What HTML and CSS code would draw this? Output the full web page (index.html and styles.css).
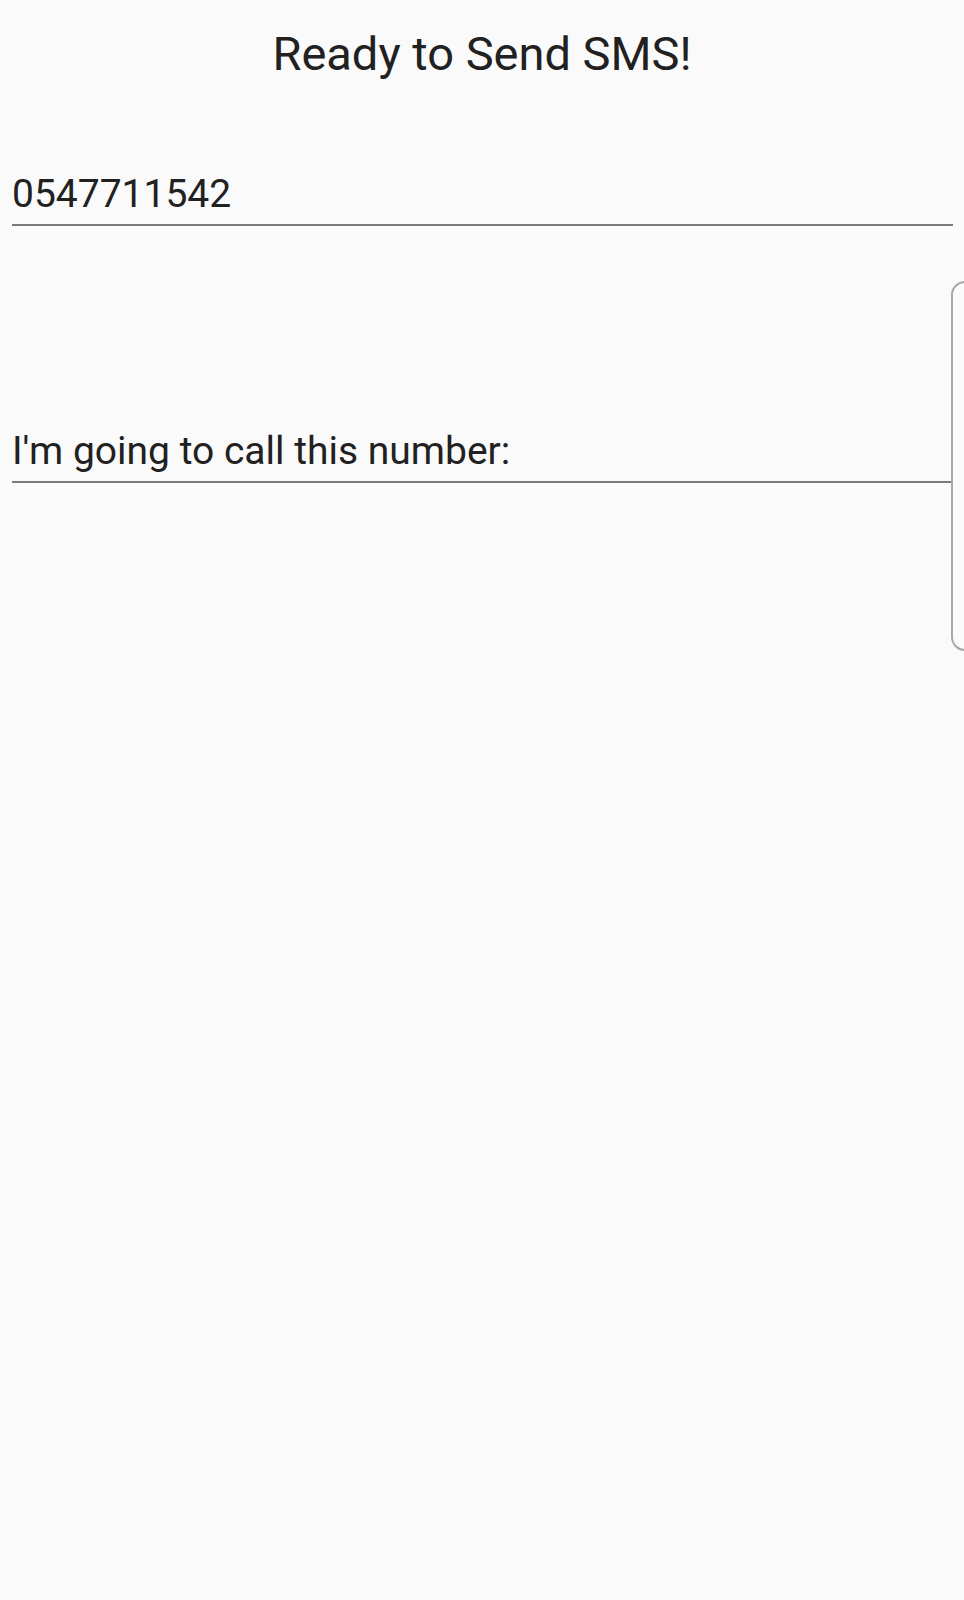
FILE: index.html
```html
<!DOCTYPE html>
<html>
<head>
<meta charset="utf-8">
<link rel="stylesheet" href="styles.css">
</head>
<body>
<div class="screen">
  <h1 class="title">Ready to Send SMS!</h1>
  <div class="field field-phone"><span class="value">0547711542</span></div>
  <div class="field field-msg"><span class="value">I'm going to call this number:</span></div>
  <div class="side-handle"></div>
</div>
</body>
</html>
```
FILE: styles.css
```css
html, body {
  margin: 0;
  padding: 0;
  background: #fafafa;
}
.screen {
  position: relative;
  width: 964px;
  height: 1600px;
  font-family: Roboto, "Noto Sans", sans-serif;
  color: #212121;
}
.title {
  margin: 0;
  padding-top: 25px;
  text-align: center;
  font-size: 47px;
  font-weight: 400;
  line-height: 57px;
}
.field {
  margin: 0 11px 0 12px;
  border-bottom: 2px solid #7a7a7a;
  font-size: 39px;
  line-height: 47px;
}
.value {
  display: block;
}
.field-phone {
  margin-top: 89px;
  padding-bottom: 6px;
}
.field-msg {
  margin-top: 202px;
  padding-bottom: 6px;
}
.side-handle {
  position: absolute;
  left: 951px;
  top: 281px;
  width: 30px;
  height: 370px;
  border: 2px solid #a8a8a8;
  border-radius: 14px;
  box-sizing: border-box;
}
```
